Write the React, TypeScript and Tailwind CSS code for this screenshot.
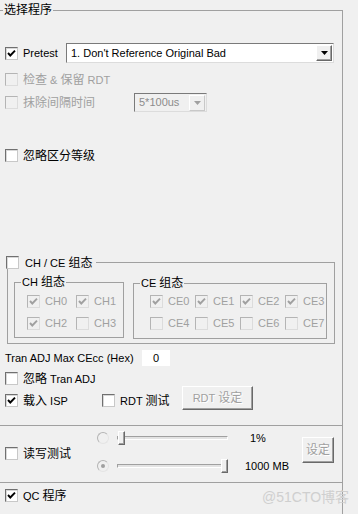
import type { ReactNode } from 'react'

function Zh({ children }: { children: ReactNode }) {
  return <span className="text-[12px]">{children}</span>
}

function Tick({ off = false }: { off?: boolean }) {
  return (
    <svg width="9" height="9" viewBox="0 0 9 9">
      <path d="M1 4 L3.3 6.5 L8 1.6" fill="none" stroke={off ? '#a0a0a0' : '#000'} strokeWidth="1.9" />
    </svg>
  )
}

function Check({ on = false, off = false }: { on?: boolean; off?: boolean }) {
  return (
    <span
      className={`flex h-[13px] w-[13px] shrink-0 items-center justify-center border ${
        off
          ? 'border-t-[#b4b4b4] border-l-[#b4b4b4] border-r-[#dcdcdc] border-b-[#dcdcdc] bg-[#f0f0f0]'
          : 'border-t-[#707070] border-l-[#707070] border-r-[#c8c8c8] border-b-[#c8c8c8] bg-white shadow-[inset_1px_1px_0_#d8d8d8]'
      }`}
    >
      {on && <Tick off={off} />}
    </span>
  )
}

function CheckRow({ label, on = false, off = false, gap = 'gap-[5px]' }: { label: ReactNode; on?: boolean; off?: boolean; gap?: string }) {
  return (
    <div className={`flex h-[13px] items-center ${gap} ${off ? 'text-[#a0a0a0]' : 'text-black'}`}>
      <Check on={on} off={off} />
      <span className="leading-none whitespace-nowrap">{label}</span>
    </div>
  )
}

function Arrow({ off = false }: { off?: boolean }) {
  return (
    <svg width="7" height="4" viewBox="0 0 7 4">
      <path d="M0 0 H7 L3.5 4 Z" fill={off ? '#a0a0a0' : '#000'} />
    </svg>
  )
}

function Combo({ text, off = false, className }: { text: string; off?: boolean; className: string }) {
  return (
    <div
      className={`flex items-center border border-t-[#7a7a7a] border-l-[#7a7a7a] border-r-[#dcdcdc] border-b-[#dcdcdc] ${
        off ? 'bg-[#f0f0f0] text-[#8c8c8c]' : 'bg-white text-black'
      } ${className}`}
    >
      <span className="flex-1 pl-[4px] whitespace-nowrap leading-none">{text}</span>
      <span
        className={`mr-[1px] flex h-[16px] w-[16px] items-center justify-center border bg-[#f0f0f0] ${
          off
            ? 'border-t-white border-l-white border-r-[#c8c8c8] border-b-[#c8c8c8]'
            : 'border-t-white border-l-white border-r-[#696969] border-b-[#696969] shadow-[inset_-1px_-1px_0_#a0a0a0]'
        }`}
      >
        <Arrow off={off} />
      </span>
    </div>
  )
}

function Btn({ children, className }: { children: ReactNode; className: string }) {
  return (
    <div
      className={`flex items-center justify-center border border-t-white border-l-white border-r-[#696969] border-b-[#696969] bg-[#f0f0f0] text-[#a0a0a0] shadow-[inset_-1px_-1px_0_#a0a0a0] [text-shadow:1px_1px_0_#fff] ${className}`}
    >
      {children}
    </div>
  )
}

function Radio({ on = false }: { on?: boolean }) {
  return (
    <span className="flex h-[12px] w-[12px] shrink-0 items-center justify-center rounded-full border border-t-[#b4b4b4] border-l-[#b4b4b4] border-r-[#e4e4e4] border-b-[#e4e4e4] bg-[#f0f0f0]">
      {on && <span className="h-[4px] w-[4px] rounded-full bg-[#a0a0a0]" />}
    </span>
  )
}

function Slider({ end = false }: { end?: boolean }) {
  return (
    <div className="relative h-[14px] w-[111px] shrink-0">
      <div className="absolute left-0 right-0 top-[5px] h-[4px] border border-t-[#a0a0a0] border-l-[#a0a0a0] border-r-white border-b-white bg-[#e3e3e3]" />
      <div
        className={`absolute top-0 h-[14px] w-[7px] border border-t-white border-l-white border-r-[#696969] border-b-[#696969] bg-[#f0f0f0] shadow-[inset_-1px_-1px_0_#a0a0a0] ${
          end ? 'right-0' : 'left-[1px]'
        }`}
      />
    </div>
  )
}

function GroupTitle({ children }: { children: ReactNode }) {
  return <div className="absolute left-[6px] top-[-8px] bg-[#f0f0f0] px-[1px] leading-[14px] whitespace-nowrap">{children}</div>
}

const CH = [
  ['CH0', true],
  ['CH1', true],
  ['CH2', true],
  ['CH3', false],
] as const

const CE = [
  ['CE0', true],
  ['CE1', true],
  ['CE2', true],
  ['CE3', true],
  ['CE4', false],
  ['CE5', false],
  ['CE6', false],
  ['CE7', false],
] as const

export default function App() {
  return (
    <div className="relative h-[514px] w-[358px] overflow-hidden bg-[#f0f0f0] font-['Liberation_Sans','Noto_Sans_CJK_SC',sans-serif] text-[11px] text-black">
      <div className="mt-[10px] flex h-[504px] w-[343px] flex-col border-r border-[#a0a0a0]">
        {/* 选择程序 */}
        <div className="relative flex h-[416px] flex-col border-t border-b border-[#a0a0a0]">
          <div className="absolute left-[3px] top-[-9px] bg-[#f0f0f0] px-[1px] text-[12px] leading-[16px]">选择程序</div>

          <div className="mt-[32px] flex h-[20px] items-center">
            <div className="ml-[5px] w-[61px]">
              <CheckRow on label="Pretest" />
            </div>
            <Combo text="1. Don't Reference Original Bad" className="h-[20px] w-[268px]" />
          </div>

          <div className="ml-[5px] mt-[10px]">
            <CheckRow off label={<><Zh>检查</Zh> &amp; <Zh>保留</Zh> RDT</>} />
          </div>

          <div className="mt-[7px] flex h-[19px] items-center">
            <div className="ml-[5px] w-[129px]">
              <CheckRow off label={<Zh>抹除间隔时间</Zh>} />
            </div>
            <Combo off text="5*100us" className="h-[19px] w-[73px]" />
          </div>

          <div className="ml-[5px] mt-[37px]">
            <CheckRow label={<Zh>忽略区分等级</Zh>} />
          </div>

          {/* CH / CE 组态 */}
          <div className="relative ml-[7px] mt-[100px] flex h-[82px] w-[328px] items-start gap-[9px] border border-[#a0a0a0] pl-[6px] pt-[19px]">
            <div className="absolute left-[-2px] top-[-7px] bg-[#f0f0f0] pr-[4px]">
              <CheckRow gap="gap-[6px]" label={<>CH / CE <Zh>组态</Zh></>} />
            </div>

            <div className="relative h-[56px] w-[110px] border border-[#a0a0a0] pl-[12px] pt-[12px]">
              <GroupTitle>CH <Zh>组态</Zh></GroupTitle>
              <div className="grid grid-cols-[49px_49px] gap-y-[9px]">
                {CH.map(([n, on]) => (
                  <CheckRow key={n} off on={on} label={n} />
                ))}
              </div>
            </div>

            <div className="relative mt-[1px] h-[56px] w-[194px] border border-[#a0a0a0] pl-[16px] pt-[11px]">
              <GroupTitle>CE <Zh>组态</Zh></GroupTitle>
              <div className="grid grid-cols-[45px_45px_45px_45px] gap-y-[9px]">
                {CE.map(([n, on]) => (
                  <CheckRow key={n} off on={on} label={n} />
                ))}
              </div>
            </div>
          </div>

          <div className="mt-[6px] flex h-[16px] items-center">
            <span className="ml-[5px] w-[137px] whitespace-nowrap">Tran ADJ Max CEcc (Hex)</span>
            <span className="flex h-[16px] w-[28px] items-center justify-center bg-white">0</span>
          </div>

          <div className="ml-[5px] mt-[6px]">
            <CheckRow label={<><Zh>忽略</Zh> Tran ADJ</>} />
          </div>

          <div className="mt-[1px] flex h-[24px] items-start">
            <div className="ml-[5px] mt-[8px] w-[97px]">
              <CheckRow on label={<><Zh>载入</Zh> ISP</>} />
            </div>
            <div className="mt-[8px] w-[80px]">
              <CheckRow label={<>RDT <Zh>测试</Zh></>} />
            </div>
            <Btn className="h-[24px] w-[71px]">
              RDT&nbsp;<Zh>设定</Zh>
            </Btn>
          </div>
        </div>

        {/* 读写测试 */}
        <div className="flex h-[57px] items-start border-b border-[#a0a0a0]">
          <div className="ml-[5px] mt-[21px] w-[92px]">
            <CheckRow label={<Zh>读写测试</Zh>} />
          </div>
          <div className="mt-[5px] flex flex-col gap-[14px]">
            <div className="flex h-[14px] items-center">
              <Radio />
              <div className="ml-[8px]">
                <Slider />
              </div>
              <span className="ml-[22px] leading-none">1%</span>
            </div>
            <div className="flex h-[14px] items-center">
              <Radio on />
              <div className="ml-[8px]">
                <Slider end />
              </div>
              <span className="ml-[17px] leading-none">1000 MB</span>
            </div>
          </div>
          <Btn className="ml-auto mr-[8px] mt-[11px] h-[26px] w-[32px]">
            <Zh>设定</Zh>
          </Btn>
        </div>

        {/* QC 程序 */}
        <div className="flex-1">
          <div className="ml-[5px] mt-[6px]">
            <CheckRow on label={<>QC <Zh>程序</Zh></>} />
          </div>
        </div>
      </div>

      <div className="absolute left-[262px] top-[488px] text-[14px] leading-[18px] text-[#cfcfcf] whitespace-nowrap">@51CTO博客</div>
    </div>
  )
}
